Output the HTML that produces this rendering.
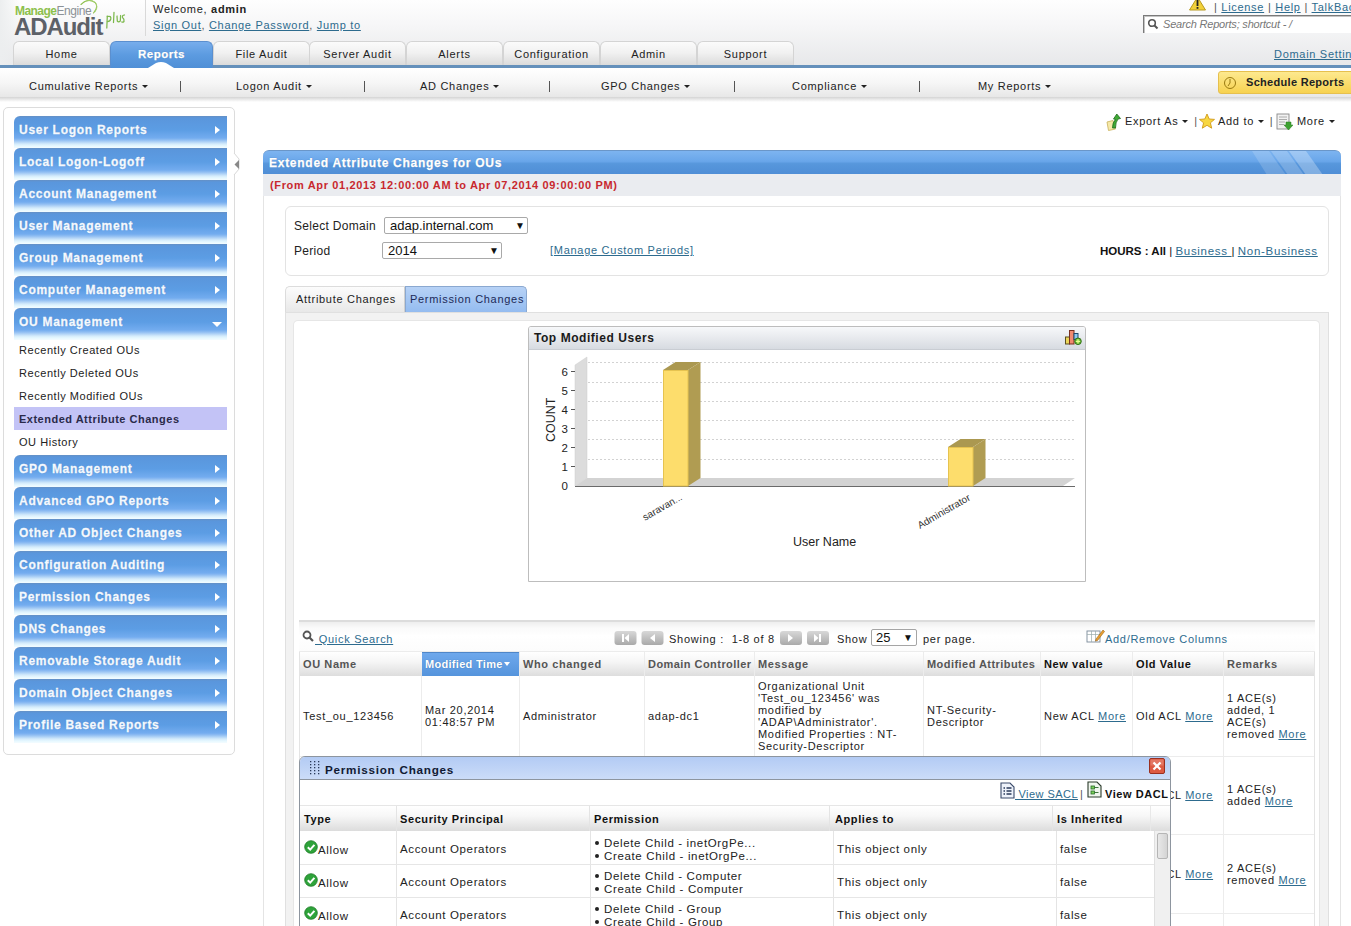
<!DOCTYPE html>
<html><head><meta charset="utf-8">
<style>
*{box-sizing:border-box}
html,body{margin:0;padding:0}
body{width:1351px;height:926px;overflow:hidden;position:relative;background:#fff;font-family:"Liberation Sans",sans-serif;font-size:11px;color:#222}
.a{position:absolute;white-space:nowrap}
.v{letter-spacing:0.7px}
a,.lnk{color:#2d6b8e;text-decoration:underline}
/* header */
#hdr{position:absolute;left:0;top:0;width:1351px;height:65px;background:linear-gradient(#fefefe 0%,#f6f6f7 40%,#e7e8ea 100%)}
#hdrL{position:absolute;left:0;top:0;width:20px;height:65px;background:linear-gradient(90deg,#eceeef,rgba(255,255,255,0))}
.tab{position:absolute;top:41px;height:25px;width:97px;border:1px solid #d4d4d4;border-bottom:none;border-radius:6px 6px 0 0;background:linear-gradient(#fbfbfb 0%,#f1f1f1 45%,#d9d9d9 100%);text-align:center;font-size:11px;letter-spacing:0.7px;color:#222;padding-top:6px}
.tab.sel{background:linear-gradient(#77adec 0%,#5c9be0 50%,#4f8fd6 100%);border:1px solid #5b8fcf;border-bottom:none;color:#fff;font-weight:bold;letter-spacing:0.5px;font-size:11.5px;height:27px;text-shadow:0 0 1px #3a6ea8;-webkit-text-stroke:0.25px #fff}
#bline{position:absolute;left:0;top:65px;width:1351px;height:3px;background:#6490bb}
#sub{position:absolute;left:0;top:68px;width:1351px;height:30px;background:linear-gradient(#ffffff 0%,#f6f6f6 50%,#e6e6e6 100%)}
#subsh{position:absolute;left:0;top:97px;width:1351px;height:5px;background:linear-gradient(#d4d4d4,#ffffff)}
.sn{position:absolute;top:80px;font-size:11px;letter-spacing:0.7px;color:#222;white-space:nowrap}
.car{display:inline-block;width:0;height:0;border-left:3px solid transparent;border-right:3px solid transparent;border-top:3px solid #222;vertical-align:middle;margin-left:4px;position:relative;top:-1px}
.sep{position:absolute;top:81px;width:1px;height:11px;background:#555}
/* sidebar */
#side{position:absolute;left:3px;top:107px;width:232px;height:648px;border:1px solid #dcdcdc;border-radius:5px;background:#fff}
.btn{position:absolute;left:14px;width:213px;height:32px;border-radius:6px 0 0 0;background:linear-gradient(#6590c4 0px,#5a96dc 2px,#5c9de4 14px,#73acef 22px,#8fbdf2 24px,#d4ebfb 28px,#e6f8ff 30px,#f4fcff 32px);color:#f4f9ff;font-weight:bold;font-size:12px;letter-spacing:0.72px;padding:7px 0 0 5px;white-space:nowrap;text-shadow:0 0 1px #4a7ab5;-webkit-text-stroke:0.3px #f4f9ff}
.btn:after{content:"";position:absolute;left:201px;top:10px;border-top:4.5px solid transparent;border-bottom:4.5px solid transparent;border-left:5px solid #fff}
.btn.dn:after{left:198px;top:14px;border-left:5px solid transparent;border-right:5px solid transparent;border-top:5px solid #fff;border-bottom:none}
.th{position:absolute;top:658px;font-weight:bold;font-size:11px;letter-spacing:0.6px;color:#555;white-space:nowrap}
.td{position:absolute;font-size:11px;letter-spacing:0.7px;color:#222;white-space:nowrap;line-height:12px}
.ph{position:absolute;top:813px;font-weight:bold;font-size:11px;letter-spacing:0.6px;color:#111;white-space:nowrap}
.pd{position:absolute;font-size:11.5px;letter-spacing:0.65px;color:#222;white-space:nowrap}
.bl{display:inline-block;width:4px;height:4px;border-radius:50%;background:#222;margin:0 5px 0 1px;vertical-align:2px}
.si{position:absolute;left:19px;font-size:11px;letter-spacing:0.55px;color:#222;white-space:nowrap}
</style></head><body>

<div id="hdr"></div><div id="hdrL"></div>
<!-- logo -->
<div class="a" style="left:15px;top:4px;font-size:12px;font-weight:bold;letter-spacing:-0.55px;color:#8cc04c">Manage<span style="color:#8b9196;font-weight:normal;letter-spacing:-0.4px">Engine</span></div>
<div class="a" style="left:14px;top:13px;font-size:24px;font-weight:bold;letter-spacing:-1.1px;color:#5d6168">ADAudit</div>
<svg class="a" style="left:104px;top:10px" width="24" height="20"><g stroke="#7cb84c" stroke-width="1.25" fill="none" stroke-linecap="round"><path d="M3.3 6 L2.8 18"/><path d="M3.3 6.5 Q7.5 5.5 6.8 9 Q6.2 11.5 3.4 11.5"/><path d="M10 2.3 L9.5 12.5"/><path d="M13 6 L13.3 11 Q14.5 12.5 16.3 11 L16.6 5.5"/><path d="M20.5 5 Q18 5.2 18.5 7.5 Q20.5 9 20 11.5 Q19 12.6 17.8 12"/></g></svg>
<svg class="a" style="left:78px;top:0" width="24" height="16"><g fill="none" stroke-linecap="round"><path d="M3 4.5 Q10 -2.5 17 2.5 Q21 7 15.5 13" stroke="#8cc04c" stroke-width="1.1"/><path d="M8 1 Q15 -1 18.5 4 Q20 8 17 12" stroke="#a6d070" stroke-width="0.9"/></g></svg>
<div class="a" style="left:145px;top:0;width:1px;height:36px;background:#d9d9d9"></div>
<div class="a v" style="left:153px;top:3px;font-size:11px;color:#222">Welcome, <b>admin</b></div>
<div class="a v" style="left:153px;top:19px;font-size:11px;color:#555"><span class="lnk">Sign Out</span>, <span class="lnk">Change Password</span>, <span class="lnk">Jump to</span></div>

<!-- top right -->
<svg class="a" style="left:1189px;top:-3px" width="17" height="14"><path d="M8.5 0 L16.5 13 L0.5 13 Z" fill="#f2d13a" stroke="#b89a20" stroke-width="1"/><rect x="7.6" y="3" width="1.8" height="6" fill="#222"/><rect x="7.6" y="10" width="1.8" height="1.8" fill="#222"/></svg>
<div class="a v" style="left:1214px;top:1px;font-size:11px;color:#555">| <span class="lnk">License</span> | <span class="lnk">Help</span> | <span class="lnk">TalkBack</span></div>
<div class="a" style="left:1143px;top:15px;width:220px;height:18px;background:#fff;border-top:1px solid #7a7a7a;border-left:1px solid #7a7a7a;box-shadow:inset 1px 1px 0 #c4c4c4"></div>
<svg class="a" style="left:1147px;top:18px" width="12" height="12"><circle cx="5" cy="5" r="3.3" stroke="#555" stroke-width="1.6" fill="none"/><path d="M7.5 7.5 L10.5 10.5" stroke="#555" stroke-width="2"/></svg>
<div class="a" style="left:1163px;top:18px;font-size:11px;font-style:italic;color:#777;letter-spacing:-0.2px">Search Reports; shortcut - /</div>
<div class="a v" style="left:1274px;top:48px;font-size:11px"><span class="lnk">Domain Settings</span></div>

<!-- tabs -->
<div class="tab" style="left:13px">Home</div>
<div class="tab" style="left:213px">File Audit</div>
<div class="tab" style="left:309px">Server Audit</div>
<div class="tab" style="left:406px">Alerts</div>
<div class="tab" style="left:503px">Configuration</div>
<div class="tab" style="left:600px">Admin</div>
<div class="tab" style="left:697px">Support</div>
<div id="bline"></div>
<div class="tab sel" style="left:110px;width:103px">Reports</div>
<svg class="a" style="left:148px;top:62px" width="26" height="6"><path d="M0 6 L8 1 Q13 -1 18 1 L26 6 Z" fill="#fff"/></svg>

<!-- sub nav -->
<div id="sub"></div><div id="subsh"></div>
<div class="sn" style="left:29px">Cumulative Reports<span class="car"></span></div>
<div class="sep" style="left:180px"></div>
<div class="sn" style="left:236px">Logon Audit<span class="car"></span></div>
<div class="sep" style="left:364px"></div>
<div class="sn" style="left:420px">AD Changes<span class="car"></span></div>
<div class="sep" style="left:549px"></div>
<div class="sn" style="left:601px">GPO Changes<span class="car"></span></div>
<div class="sep" style="left:734px"></div>
<div class="sn" style="left:792px">Compliance<span class="car"></span></div>
<div class="sep" style="left:919px"></div>
<div class="sn" style="left:978px">My Reports<span class="car"></span></div>
<div class="a" style="left:1218px;top:71px;width:140px;height:23px;border:1px solid #e6c04e;border-radius:3px;background:linear-gradient(#fde98f,#f7d250)"></div>
<svg class="a" style="left:1223px;top:76px" width="14" height="14"><circle cx="7" cy="7" r="5.5" stroke="#9a7a10" stroke-width="1" fill="none"/><path d="M7 3 L7 7 L5 10" stroke="#9a7a10" stroke-width="1" fill="none"/></svg>
<div class="a" style="left:1246px;top:76px;font-size:11px;font-weight:bold;letter-spacing:0.3px;color:#222">Schedule Reports</div>

<!-- sidebar -->
<div id="side"></div>
<svg class="a" style="left:233px;top:153px" width="8" height="23"><path d="M1 0 L6 6 L6 16 L1 22" stroke="#d8d8d8" fill="#fff"/><path d="M6 7 L1.5 11.5 L6 16 Z" fill="#888"/></svg>
<div class="btn" style="top:116px">User Logon Reports</div>
<div class="btn" style="top:148px">Local Logon-Logoff</div>
<div class="btn" style="top:180px">Account Management</div>
<div class="btn" style="top:212px">User Management</div>
<div class="btn" style="top:244px">Group Management</div>
<div class="btn" style="top:276px">Computer Management</div>
<div class="btn dn" style="top:308px">OU Management</div>
<div class="si" style="top:344px">Recently Created OUs</div>
<div class="si" style="top:367px">Recently Deleted OUs</div>
<div class="si" style="top:390px">Recently Modified OUs</div>
<div class="a" style="left:14px;top:407px;width:213px;height:23px;background:#c3c3f6"></div>
<div class="si" style="top:413px;font-weight:bold;color:#2a2a4a;letter-spacing:0.5px">Extended Attribute Changes</div>
<div class="si" style="top:436px">OU History</div>
<div class="btn" style="top:455px">GPO Management</div>
<div class="btn" style="top:487px">Advanced GPO Reports</div>
<div class="btn" style="top:519px">Other AD Object Changes</div>
<div class="btn" style="top:551px">Configuration Auditing</div>
<div class="btn" style="top:583px">Permission Changes</div>
<div class="btn" style="top:615px">DNS Changes</div>
<div class="btn" style="top:647px">Removable Storage Audit</div>
<div class="btn" style="top:679px">Domain Object Changes</div>
<div class="btn" style="top:711px">Profile Based Reports</div>

<!-- toolbar -->
<svg class="a" style="left:1106px;top:113px" width="16" height="18"><path d="M1 9 L7 7.5 L9.5 16 L2.5 17.5 Z" fill="#f6e9a8" stroke="#cdb868" stroke-width="0.9"/><path d="M6.5 15 Q6.5 9 9.5 6.5 L7.5 6 L10.8 1 L14.5 5.5 L12 6 Q9.5 9 9.5 15 Z" fill="#3faa35" stroke="#1f6a1a" stroke-width="0.8"/></svg>
<div class="a v" style="left:1125px;top:115px;color:#222">Export As<span class="car"></span> <span style="color:#555;margin-left:2px">|</span></div>
<svg class="a" style="left:1199px;top:113px" width="16" height="17"><path d="M8 1 L10.2 6 L15.5 6.4 L11.4 9.8 L12.7 15.2 L8 12.3 L3.3 15.2 L4.6 9.8 L0.5 6.4 L5.8 6 Z" fill="#f7d742" stroke="#d19a18" stroke-width="0.9"/></svg>
<div class="a v" style="left:1218px;top:115px;color:#222">Add to<span class="car"></span> <span style="color:#555;margin-left:2px">|</span></div>
<svg class="a" style="left:1276px;top:113px" width="17" height="18"><rect x="1" y="1" width="12" height="15" fill="#f2f2f2" stroke="#888" stroke-width="0.9"/><path d="M3 4h8M3 6.5h8M3 9h6M3 11.5h5" stroke="#999" stroke-width="0.8"/><path d="M10 9 L15 9 L15 12 L17 12 L12.5 17 L8 12 L10 12 Z" fill="#3ea232" stroke="#2a7a20" stroke-width="0.5"/></svg>
<div class="a v" style="left:1297px;top:115px;color:#222">More<span class="car"></span></div>

<!-- panel -->
<div class="a" style="left:263px;top:150px;width:1078px;height:24px;border-radius:6px 6px 0 0;background:linear-gradient(#7db4f0 0%,#69a6ea 45%,#5797dc 55%,#4f8ed6 100%);border-top:1px solid #6a96c8;overflow:hidden">
  <svg style="position:absolute;left:986px;top:0" width="80" height="24"><path d="M3 0 L20 0 L37 24 L18 24 Z" fill="rgba(255,255,255,0.16)"/><path d="M22 0 L38 0 L55 24 L39 24 Z" fill="rgba(255,255,255,0.2)"/><path d="M40 0 L57 0 L74 24 L57 24 Z" fill="rgba(255,255,255,0.28)"/></svg>
</div>
<div class="a" style="left:269px;top:156px;font-size:12px;font-weight:bold;letter-spacing:0.73px;color:#fff;text-shadow:0 0 1px #3d6fa8;-webkit-text-stroke:0.25px #fff">Extended Attribute Changes for OUs</div>
<div class="a" style="left:263px;top:174px;width:1078px;height:22px;background:#eaecf0"></div>
<div class="a" style="left:270px;top:179px;font-size:11px;font-weight:bold;letter-spacing:0.65px;color:#c8282e">(From Apr 01,2013 12:00:00 AM to Apr 07,2014 09:00:00 PM)</div>
<div class="a" style="left:263px;top:196px;width:1078px;height:740px;border-left:1px solid #e4e4e4;border-right:1px solid #e4e4e4;background:#fff"></div>

<!-- domain box -->
<div class="a" style="left:285px;top:206px;width:1044px;height:70px;border:1px solid #e3e3e3;border-radius:6px;background:#fff"></div>
<div class="a" style="left:294px;top:219px;font-size:12px;letter-spacing:0.3px;color:#222">Select Domain</div>
<div class="a" style="left:294px;top:244px;font-size:12px;letter-spacing:0.3px;color:#222">Period</div>
<div class="a" style="left:384px;top:217px;width:144px;height:17px;border:1px solid #a9a9a9;border-radius:2px;background:#fff;font-size:13px;padding:0 0 0 5px;line-height:15px;color:#111">adap.internal.com<span style="position:absolute;left:130px;top:0;font-size:10px">&#9660;</span></div>
<div class="a" style="left:382px;top:242px;width:120px;height:17px;border:1px solid #a9a9a9;border-radius:2px;background:#fff;font-size:13px;padding:0 0 0 5px;line-height:15px;color:#111">2014<span style="position:absolute;left:106px;top:0;font-size:10px">&#9660;</span></div>
<div class="a" style="left:550px;top:244px;font-size:11px;letter-spacing:0.72px"><span class="lnk">[Manage Custom Periods]</span></div>
<div class="a" style="left:1100px;top:245px;font-size:11.5px;color:#111"><b>HOURS : All</b> | <span class="lnk" style="letter-spacing:0.7px">Business </span> | <span class="lnk" style="letter-spacing:0.7px">Non-Business </span></div>

<!-- tab container -->
<div class="a" style="left:285px;top:312px;width:1044px;height:660px;border:1px solid #e0e0e0;border-bottom:none;background:#f2f2f2"></div>
<div class="a" style="left:285px;top:286px;width:120px;height:26px;border-top:1px solid #dcdcdc;border-left:1px solid #dcdcdc;border-radius:5px 0 0 0;background:linear-gradient(#fcfcfc,#e8e8e8);border-right:1px solid #cfcfcf"></div>
<div class="a" style="left:296px;top:293px;font-size:11px;letter-spacing:0.7px;color:#222">Attribute Changes</div>
<div class="a" style="left:405px;top:286px;width:122px;height:26px;border:1px solid #8aa8d0;border-bottom:none;border-radius:0 5px 0 0;background:linear-gradient(#b7d2f6,#94bcf0)"></div>
<div class="a" style="left:410px;top:293px;font-size:11px;letter-spacing:0.7px;color:#1c2a58">Permission Changes</div>
<div class="a" style="left:293px;top:320px;width:1027px;height:620px;border-top:1px solid #e6e6e6;border-left:1px solid #e6e6e6;border-right:1px solid #e6e6e6;border-radius:5px 5px 0 0;background:#fff"></div>

<!-- chart box -->
<div class="a" style="left:528px;top:326px;width:558px;height:256px;border:1px solid #bdbdbd;border-radius:3px 3px 0 0;background:#fff"></div>
<div class="a" style="left:529px;top:327px;width:556px;height:23px;border-radius:2px 2px 0 0;background:linear-gradient(#f7f8fa,#d7dbe1);border-bottom:1px solid #c9cdd3"></div>
<div class="a" style="left:534px;top:331px;font-size:12px;font-weight:bold;letter-spacing:0.55px;color:#1a1a1a">Top Modified Users</div>
<svg class="a" style="left:1064px;top:329px" width="18" height="17"><rect x="1.5" y="8" width="4" height="7" fill="#ecd65a" stroke="#5a5020" stroke-width="1"/><rect x="5.5" y="1.5" width="4.5" height="13.5" fill="#f08a70" stroke="#7a3020" stroke-width="1"/><rect x="10" y="4.5" width="4" height="6" fill="#8ac8f0" stroke="#1a4a70" stroke-width="1"/><circle cx="14" cy="12.3" r="3.3" fill="#68b838" stroke="#2a6a10" stroke-width="0.9"/><path d="M14 10.2v4.2M11.9 12.3h4.2" stroke="#e8ff90" stroke-width="1.3"/></svg>
<svg class="a" style="left:528px;top:326px" width="558" height="256" font-family="Liberation Sans" >
  <!-- gridlines (offsets: chart x-528, y-326) -->
  <g stroke="#d2d2d2" stroke-width="1" stroke-dasharray="2,2">
    <line x1="60" y1="36.5" x2="547" y2="36.5"/>
    <line x1="60" y1="56.5" x2="547" y2="56.5"/>
    <line x1="60" y1="75.5" x2="547" y2="75.5"/>
    <line x1="60" y1="94.5" x2="547" y2="94.5"/>
    <line x1="60" y1="113.5" x2="547" y2="113.5"/>
    <line x1="60" y1="133.5" x2="547" y2="133.5"/>
  </g>
  <!-- wall -->
  <path d="M47 39 L59 31 L59 152 L47 160 Z" fill="#dcdcdc" stroke="#cfcfcf" stroke-width="0.5"/>
  <!-- floor -->
  <path d="M47 160 L535 160 L547 152 L59 152 Z" fill="#d3d3d3"/>
  <line x1="47" y1="160.5" x2="547" y2="160.5" stroke="#6a6a6a" stroke-width="1"/>
  <!-- ticks -->
  <g stroke="#555" stroke-width="1">
    <line x1="43" y1="45.5" x2="47" y2="45.5"/><line x1="43" y1="64.5" x2="47" y2="64.5"/><line x1="43" y1="83.5" x2="47" y2="83.5"/><line x1="43" y1="102.5" x2="47" y2="102.5"/><line x1="43" y1="121.5" x2="47" y2="121.5"/><line x1="43" y1="140.5" x2="47" y2="140.5"/>
  </g>
  <g font-size="11.5" fill="#222" text-anchor="end" transform="translate(-1,0)">
    <text x="41" y="49.5">6</text><text x="41" y="68.5">5</text><text x="41" y="87.5">4</text><text x="41" y="106.5">3</text><text x="41" y="125.5">2</text><text x="41" y="144.5">1</text><text x="41" y="164">0</text>
  </g>
  <text transform="translate(27,116) rotate(-90)" font-size="12.5" fill="#222">COUNT</text>
  <!-- bar 1 -->
  <path d="M135 44 L160 44 L172.5 36 L147.5 36 Z" fill="#ab9850"/>
  <path d="M160 44 L172.5 36 L172.5 152 L160 160 Z" fill="#b09c52"/>
  <rect x="135.5" y="44.5" width="24.5" height="115.5" fill="#fddd6c" stroke="#e6c350" stroke-width="1"/>
  <!-- bar 2 -->
  <path d="M420 121 L445 121 L457.5 113 L432.5 113 Z" fill="#ab9850"/>
  <path d="M445 121 L457.5 113 L457.5 152 L445 160 Z" fill="#b09c52"/>
  <rect x="420.5" y="121.5" width="24.5" height="38.5" fill="#fddd6c" stroke="#e6c350" stroke-width="1"/>
  <g font-size="10" fill="#333">
    <text transform="translate(117,195) rotate(-30)">saravan...</text>
    <text transform="translate(392,203) rotate(-30)">Administrator</text>
  </g>
  <text x="265" y="220" font-size="12.5" fill="#222">User Name</text>
</svg>

<!-- table -->
<div class="a" style="left:299px;top:620px;width:1016px;height:320px;border-left:1px solid #e4e4e4;border-right:1px solid #e4e4e4;background:#fff"></div>
<div class="a" style="left:299px;top:620px;width:1016px;height:32px;border-top:2px solid #dcdcdc;background:linear-gradient(#eeeeee 0px,#fafafa 6px,#fff 14px,#fcfcfc 100%);border-bottom:1px solid #ececec"></div>
<svg class="a" style="left:302px;top:630px" width="13" height="13"><circle cx="5" cy="5" r="3.5" stroke="#555" stroke-width="1.8" fill="none"/><path d="M7.5 7.5 L11 11" stroke="#555" stroke-width="2.2"/></svg>
<div class="a" style="left:315px;top:633px;letter-spacing:0.7px"><span class="lnk">&nbsp;Quick Search</span></div>
<svg class="a" style="left:614px;top:630px" width="216" height="16">
  <defs><linearGradient id="pgg" x1="0" y1="0" x2="0" y2="1"><stop offset="0" stop-color="#d8d8d8"/><stop offset="1" stop-color="#a9a9a9"/></linearGradient></defs>
  <rect x="0.5" y="1" width="22" height="14" rx="3" fill="url(#pgg)"/>
  <rect x="27.5" y="1" width="22" height="14" rx="3" fill="url(#pgg)"/>
  <rect x="166" y="1" width="22" height="14" rx="3" fill="url(#pgg)"/>
  <rect x="193" y="1" width="22" height="14" rx="3" fill="url(#pgg)"/>
  <g fill="#fff"><rect x="8" y="4" width="2" height="8"/><path d="M15 4 L10.5 8 L15 12 Z"/><path d="M41 4 L36 8 L41 12 Z"/><path d="M174 4 L179 8 L174 12 Z"/><path d="M200 4 L204.5 8 L200 12 Z"/><rect x="205" y="4" width="2" height="8"/></g>
</svg>
<div class="a" style="left:669px;top:633px;letter-spacing:0.75px;color:#222">Showing :&nbsp; 1-8 of 8</div>
<div class="a" style="left:837px;top:633px;letter-spacing:0.7px;color:#222">Show</div>
<div class="a" style="left:871px;top:629px;width:46px;height:17px;border:1px solid #a5a5a5;border-radius:2px;background:#fff;font-size:13px;line-height:15px;padding-left:4px;color:#111">25<span style="position:absolute;left:31px;top:0;font-size:10px">&#9660;</span></div>
<div class="a" style="left:923px;top:633px;letter-spacing:0.7px;color:#222">per page.</div>
<svg class="a" style="left:1086px;top:628px" width="19" height="16"><rect x="1" y="3" width="13" height="11" fill="#fff" stroke="#7a8a9a" stroke-width="0.9"/><path d="M1 6.5h13M5.5 3v11M9.5 3v11" stroke="#9aa" stroke-width="0.7"/><path d="M10 11 L17 2 L18.5 3.5 L11.5 12.5 L9.5 13 Z" fill="#e8a030" stroke="#a06010" stroke-width="0.6"/></svg>
<div class="a" style="left:1105px;top:633px;letter-spacing:0.7px"><span style="color:#2d6b8e">Add/Remove Columns</span></div>

<!-- header row -->
<div class="a" style="left:300px;top:652px;width:1014px;height:24px;background:linear-gradient(#ffffff 0%,#f6f6f6 40%,#dddddd 100%)"></div>
<div class="a" style="left:422px;top:652px;width:97px;height:24px;background:linear-gradient(#6ea8ec,#5594dc);border-top:1px solid #4f86c8"></div>
<div class="a" style="left:519px;top:652px;width:1px;height:290px;background:#ececec"></div>
<div class="a" style="left:421px;top:676px;width:1px;height:266px;background:#ececec"></div>
<div class="a" style="left:644px;top:652px;width:1px;height:290px;background:#ececec"></div>
<div class="a" style="left:754px;top:652px;width:1px;height:290px;background:#ececec"></div>
<div class="a" style="left:923px;top:652px;width:1px;height:290px;background:#ececec"></div>
<div class="a" style="left:1040px;top:652px;width:1px;height:290px;background:#ececec"></div>
<div class="a" style="left:1132px;top:652px;width:1px;height:290px;background:#ececec"></div>
<div class="a" style="left:1223px;top:652px;width:1px;height:290px;background:#ececec"></div>
<div class="a" style="left:300px;top:756px;width:1014px;height:1px;background:#ececec"></div>
<div class="a" style="left:300px;top:834px;width:1014px;height:1px;background:#ececec"></div>
<div class="a" style="left:300px;top:913px;width:1014px;height:1px;background:#ececec"></div>
<div class="th" style="left:303px">OU Name</div>
<div class="th" style="left:425px;color:#fff;letter-spacing:0.3px;text-shadow:0 0 1px #3a6ea8">Modified Time<span class="car" style="border-top-color:#fff;margin-left:1px;border-left-width:3.5px;border-right-width:3.5px;border-top-width:4px"></span></div>
<div class="th" style="left:523px">Who changed</div>
<div class="th" style="left:648px;letter-spacing:0.45px">Domain Controller</div>
<div class="th" style="left:758px">Message</div>
<div class="th" style="left:927px;letter-spacing:0.45px">Modified Attributes</div>
<div class="th" style="left:1044px;color:#111">New value</div>
<div class="th" style="left:1136px;color:#111">Old Value</div>
<div class="th" style="left:1227px">Remarks</div>

<!-- row 1 -->
<div class="td" style="left:303px;top:710px">Test_ou_123456</div>
<div class="td" style="left:425px;top:704px">Mar 20,2014<br>01:48:57 PM</div>
<div class="td" style="left:523px;top:710px">Administrator</div>
<div class="td" style="left:648px;top:710px">adap-dc1</div>
<div class="td" style="left:758px;top:680px">Organizational Unit<br>'Test_ou_123456' was<br>modified by<br>'ADAP\Administrator'.<br>Modified Properties : NT-<br>Security-Descriptor</div>
<div class="td" style="left:927px;top:704px">NT-Security-<br>Descriptor</div>
<div class="td" style="left:1044px;top:710px">New ACL <span class="lnk">More</span></div>
<div class="td" style="left:1136px;top:710px">Old ACL <span class="lnk">More</span></div>
<div class="td" style="left:1227px;top:692px">1 ACE(s)<br>added, 1<br>ACE(s)<br>removed <span class="lnk">More</span></div>
<!-- row 2,3 visible parts -->
<div class="td" style="left:1136px;top:789px">Old ACL <span class="lnk">More</span></div>
<div class="td" style="left:1227px;top:783px">1 ACE(s)<br>added <span class="lnk">More</span></div>
<div class="td" style="left:1136px;top:868px">Old ACL <span class="lnk">More</span></div>
<div class="td" style="left:1227px;top:862px">2 ACE(s)<br>removed <span class="lnk">More</span></div>

<!-- popup -->
<div class="a" style="left:299px;top:756px;width:872px;height:180px;border:1px solid #8d959f;border-radius:6px 6px 0 0;background:#fff"></div>
<div class="a" style="left:300px;top:757px;width:870px;height:23px;border-radius:5px 5px 0 0;background:linear-gradient(#b3cbf4,#cbdcf8);border-bottom:1px solid #8d959f"></div>
<svg class="a" style="left:309px;top:759px" width="12" height="17"><rect x="1" y="2" width="1.3" height="1.3" fill="#2a3a5a"/><rect x="1" y="5" width="1.3" height="1.3" fill="#2a3a5a"/><rect x="1" y="8" width="1.3" height="1.3" fill="#2a3a5a"/><rect x="1" y="11" width="1.3" height="1.3" fill="#2a3a5a"/><rect x="1" y="14" width="1.3" height="1.3" fill="#2a3a5a"/><rect x="5" y="2" width="1.3" height="1.3" fill="#2a3a5a"/><rect x="5" y="5" width="1.3" height="1.3" fill="#2a3a5a"/><rect x="5" y="8" width="1.3" height="1.3" fill="#2a3a5a"/><rect x="5" y="11" width="1.3" height="1.3" fill="#2a3a5a"/><rect x="5" y="14" width="1.3" height="1.3" fill="#2a3a5a"/><rect x="9" y="2" width="1.3" height="1.3" fill="#2a3a5a"/><rect x="9" y="5" width="1.3" height="1.3" fill="#2a3a5a"/><rect x="9" y="8" width="1.3" height="1.3" fill="#2a3a5a"/><rect x="9" y="11" width="1.3" height="1.3" fill="#2a3a5a"/><rect x="9" y="14" width="1.3" height="1.3" fill="#2a3a5a"/></svg>
<div class="a" style="left:325px;top:763px;font-size:11.7px;font-weight:bold;letter-spacing:0.75px;color:#111a33">Permission Changes</div>
<svg class="a" style="left:1149px;top:758px" width="17" height="17"><rect x="0.5" y="0.5" width="15" height="15" rx="1.5" fill="#dd5a42" stroke="#9a3020" stroke-width="1"/><rect x="1.5" y="1.5" width="13" height="6" fill="rgba(255,255,255,0.18)"/><path d="M4.5 4.5 L11.5 11.5 M11.5 4.5 L4.5 11.5" stroke="#fff" stroke-width="2.2"/></svg>
<!-- popup toolbar -->
<svg class="a" style="left:1000px;top:782px" width="16" height="17"><path d="M1 1 L10 1 L14 5 L14 16 L1 16 Z" fill="#eef2fa" stroke="#3a4a6a" stroke-width="1.1"/><path d="M3.5 6h1.5M6.5 6h5M3.5 9h1.5M6.5 9h5M3.5 12h1.5M6.5 12h5" stroke="#2a3a5a" stroke-width="1.3"/></svg>
<div class="a" style="left:1015px;top:788px;letter-spacing:0.45px"><span class="lnk">&nbsp;View SACL</span></div><div class="a" style="left:1080px;top:788px;color:#555">|</div>
<svg class="a" style="left:1087px;top:781px" width="16" height="17"><path d="M1 1 L10 1 L14 5 L14 16 L1 16 Z" fill="#f0f6ee" stroke="#2a3a2a" stroke-width="1.1"/><rect x="4" y="5" width="3.5" height="3" fill="#7ad05a" stroke="#2a6a2a" stroke-width="0.8"/><rect x="4" y="10" width="3.5" height="3" fill="#7ad05a" stroke="#2a6a2a" stroke-width="0.8"/><path d="M7.5 6.5h4M7.5 11.5h4" stroke="#2a6a2a" stroke-width="0.9"/></svg>
<div class="a" style="left:1105px;top:788px;font-weight:bold;letter-spacing:0.55px;color:#111">View DACL</div>
<!-- popup header row -->
<div class="a" style="left:300px;top:805px;width:870px;height:26px;border-top:1px solid #e6e6e6;background:linear-gradient(#ffffff 0%,#f7f7f7 40%,#dcdcdc 100%)"></div>
<div class="a" style="left:396px;top:806px;width:1px;height:130px;background:#e4e4e4"></div>
<div class="a" style="left:589px;top:806px;width:1px;height:25px;background:#e4e4e4"></div>
<div class="a" style="left:590px;top:831px;width:1px;height:100px;background:#e4e4e4"></div>
<div class="a" style="left:829px;top:806px;width:1px;height:25px;background:#e4e4e4"></div>
<div class="a" style="left:833px;top:831px;width:1px;height:100px;background:#e4e4e4"></div>
<div class="a" style="left:1052px;top:806px;width:1px;height:25px;background:#e4e4e4"></div>
<div class="a" style="left:1056px;top:831px;width:1px;height:100px;background:#e4e4e4"></div>
<div class="a" style="left:1150px;top:806px;width:1px;height:25px;background:#e8e8e8"></div>
<div class="a" style="left:300px;top:864px;width:854px;height:1px;background:#e6e6e6"></div>
<div class="a" style="left:300px;top:897px;width:854px;height:1px;background:#e6e6e6"></div>
<div class="a" style="left:1154px;top:831px;width:16px;height:100px;background:#f0f0f0;border-left:1px solid #e0e0e0"></div>
<div class="a" style="left:1157px;top:833px;width:11px;height:26px;border:1px solid #b5b5b5;border-radius:2px;background:linear-gradient(90deg,#e8e8e8,#d4d4d4)"></div>
<div class="ph" style="left:304px">Type</div>
<div class="ph" style="left:400px">Security Principal</div>
<div class="ph" style="left:594px">Permission</div>
<div class="ph" style="left:835px">Applies to</div>
<div class="ph" style="left:1057px">Is Inherited</div>
<!-- popup rows -->
<svg class="a" style="left:304px;top:840px" width="14" height="14"><circle cx="7" cy="7" r="6.3" fill="#2ea33a" stroke="#1d7a26" stroke-width="0.8"/><path d="M3.8 7.2 L6.2 9.6 L10.4 4.8" stroke="#fff" stroke-width="2" fill="none"/></svg>
<svg class="a" style="left:304px;top:873px" width="14" height="14"><circle cx="7" cy="7" r="6.3" fill="#2ea33a" stroke="#1d7a26" stroke-width="0.8"/><path d="M3.8 7.2 L6.2 9.6 L10.4 4.8" stroke="#fff" stroke-width="2" fill="none"/></svg>
<svg class="a" style="left:304px;top:906px" width="14" height="14"><circle cx="7" cy="7" r="6.3" fill="#2ea33a" stroke="#1d7a26" stroke-width="0.8"/><path d="M3.8 7.2 L6.2 9.6 L10.4 4.8" stroke="#fff" stroke-width="2" fill="none"/></svg>
<div class="pd" style="left:318px;top:844px">Allow</div>
<div class="pd" style="left:318px;top:877px">Allow</div>
<div class="pd" style="left:318px;top:910px">Allow</div>
<div class="pd" style="left:400px;top:843px">Account Operators</div>
<div class="pd" style="left:400px;top:876px">Account Operators</div>
<div class="pd" style="left:400px;top:909px">Account Operators</div>
<div class="pd" style="left:594px;top:837px;line-height:13px"><i class="bl"></i>Delete Child - inetOrgPe...<br><i class="bl"></i>Create Child - inetOrgPe...</div>
<div class="pd" style="left:594px;top:870px;line-height:13px"><i class="bl"></i>Delete Child - Computer<br><i class="bl"></i>Create Child - Computer</div>
<div class="pd" style="left:594px;top:903px;line-height:13px"><i class="bl"></i>Delete Child - Group<br><i class="bl"></i>Create Child - Group</div>
<div class="pd" style="left:837px;top:843px">This object only</div>
<div class="pd" style="left:837px;top:876px">This object only</div>
<div class="pd" style="left:837px;top:909px">This object only</div>
<div class="pd" style="left:1060px;top:843px">false</div>
<div class="pd" style="left:1060px;top:876px">false</div>
<div class="pd" style="left:1060px;top:909px">false</div>

<!--POPUP-->

<!--CHART-->

<!--MAIN-->

</body></html>
